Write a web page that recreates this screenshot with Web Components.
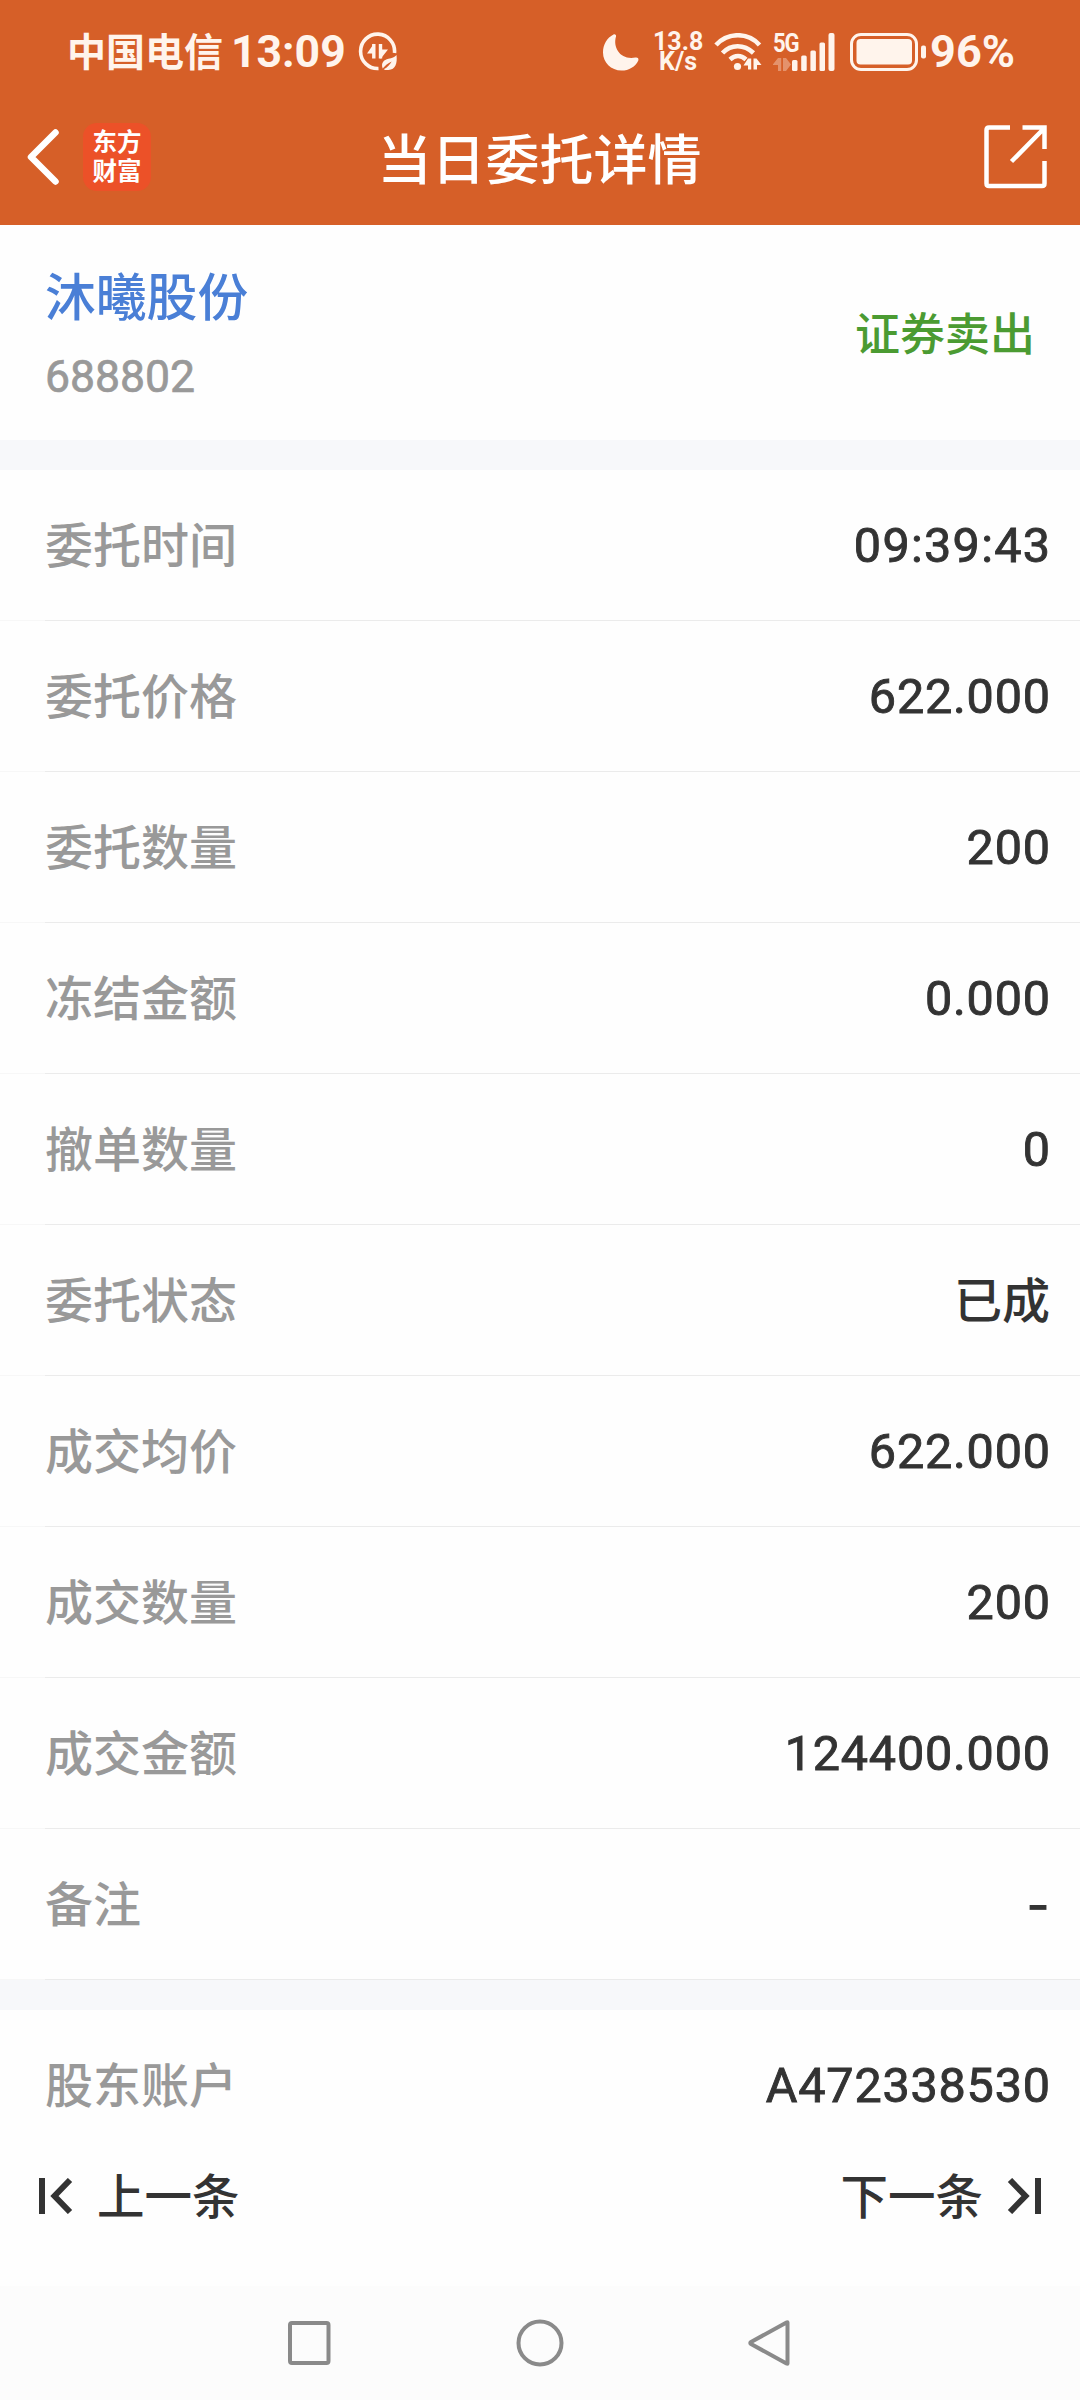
<!DOCTYPE html>
<html lang="zh-CN">
<head>
<meta charset="utf-8">
<title>当日委托详情</title>
<style>
  body {
    margin: 0;
    width: 1080px;
    background: #fefefe;
    font-family: Roboto, "Noto Sans CJK SC", sans-serif;
    font-weight: 500;
    color: #333;
  }
</style>
</head>
<body>
<order-page></order-page>

<script>
class StatusBar extends HTMLElement {
  constructor() {
    super();
    this.attachShadow({ mode: "open" });
  }
  connectedCallback() {
    this.shadowRoot.innerHTML = `
      <style>
        :host {
          display: flex;
          align-items: center;
          box-sizing: border-box;
          height: 103px;
          padding: 0 65px 0 67px;
          color: #fff4ec;
          font-weight: 700;
          white-space: nowrap;
        }
        svg { display: block; flex: none; }
        .carrier { font-size: 39px; line-height: 60px; padding-top: 3px; }
        .time { font-size: 44.500px; line-height: 60px; margin-left: 8px; }
        .saver { margin-left: 12px; }
        .right { display: flex; align-items: center; margin-left: auto; }
        .speed {
          width: 52px;
          margin-left: 13px;
          font-size: 25px;
          line-height: 20px;
          text-align: center;
          white-space: pre-line;
        }
        .wifi { margin-left: 10px; }
        .cell { display: grid; margin-left: 11px; }
        .cell > * { grid-area: 1 / 1; }
        .cell span { font-size: 26px; line-height: 20px; letter-spacing: -1.5px; transform: scaleX(0.85); transform-origin: left; }
        .battery { margin-left: 15px; }
        .level { font-size: 45px; line-height: 60px; margin-left: 4px; }
      </style>
      <span class="carrier">中国电信</span>
      <span class="time">13:09</span>
      <svg class="saver" width="40" height="40" viewBox="0 0 40 40" fill="none" stroke="currentColor" stroke-width="3.6">
        <path d="M36.500 21A17 17.200 0 1 0 20.500 36.500"/>
        <path d="M15.800 12v14.500M22.500 12v14.500" stroke-width="3.4"/>
        <path d="M16 11.500v10H9zM22.500 27v-9.500H30z" fill="currentColor" stroke="none"/>
        <path d="M38.500 23c1 8.500-1 14.500-8 15-2 .2-3.500 0-4.800-.8 4-1.900 6-4.400 8-7.700-4 1.700-6.500 4.200-9 7-2-5.500 1-8.800 5.800-9.800 3.500-.7 6-1.500 8-3.700z" fill="currentColor" stroke="none"/>
      </svg>
      <div class="right">
        <svg width="37" height="38" viewBox="0 0 37 38" fill="currentColor">
          <path d="M11.500 1.500c1.500-.7 3 .5 2.500 2C10.500 15 19 27.500 33.500 24.500c2-.4 3.500 1 2.800 2.900C33.500 33.500 27 37.500 19.500 37.500 9 37.500 1 29.500 1 19.500 1 11.500 5 4.800 11.500 1.500z"/>
        </svg>
        <div class="speed">13.8\nK/s</div>
        <svg class="wifi" width="48" height="38" viewBox="0 0 48 38" fill="none" stroke="currentColor" stroke-width="4.600">
          <path d="M2 12C14-1 34-1 45.500 12M8.500 20C17 11 30 11 39.500 20M16 26.500C21 22 27 22 32 26.500"/>
          <circle cx="23.500" cy="33.500" r="3.600" fill="currentColor" stroke="none"/>
          <path d="M34 25.500h3.200v11H34v-4h-4.500zM39.500 25.500h3l5 6.500h-4.500v4.500h-3.500z" fill="currentColor" stroke="none"/>
        </svg>
        <div class="cell">
          <svg width="62" height="38" viewBox="0 0 62 38" fill="currentColor">
            <path opacity=".35" d="M5 25h3.200v13H5v-6H-.5zM10 25h3l5 6.500-5 6.500h-3z"/>
            <rect x="19" y="27" width="5.500" height="11" rx="1.500"/>
            <rect x="28.200" y="22.500" width="5.500" height="15.500" rx="1.500"/>
            <rect x="37.400" y="17.500" width="5.500" height="20.500" rx="1.500"/>
            <rect x="46.500" y="9.500" width="5.500" height="28.500" rx="1.500"/>
            <rect x="55.500" y="0" width="6" height="38" rx="2"/>
          </svg>
          <span>5G</span>
        </div>
        <svg class="battery" width="76" height="38" viewBox="0 0 76 38" fill="currentColor">
          <rect x="1.500" y="1.500" width="65" height="35" rx="9.500" fill="none" stroke="currentColor" stroke-width="3"/>
          <rect x="6.500" y="6" width="55.500" height="25.500" rx="4"/>
          <rect x="71" y="12.500" width="5" height="13" rx="2"/>
        </svg>
        <span class="level">96%</span>
      </div>
    `;
  }
}

class TitleBar extends HTMLElement {
  constructor() {
    super();
    this.attachShadow({ mode: "open" });
  }
  connectedCallback() {
    this.shadowRoot.innerHTML = `
      <style>
        :host {
          display: grid;
          grid-template-columns: 1fr auto 1fr;
          align-items: center;
          height: 108px;
          padding: 0 32px 14px 27px;
          color: #fff;
        }
        .left { display: flex; align-items: center; gap: 24px; }
        .logo {
          display: flex;
          flex-direction: column;
          align-items: center;
          justify-content: center;
          width: 68px;
          height: 68px;
          border-radius: 14px;
          background: #ec5128;
          font-size: 24.500px;
          line-height: 29px;
          font-weight: 700;
        }
        .title { font-size: 54px; line-height: 70px; padding-top: 9px; padding-left: 4px; }
        .share { justify-self: end; }
        svg { display: block; }
      </style>
      <div class="left">
        <svg width="32" height="56" viewBox="0 0 32 56" fill="none" stroke="currentColor" stroke-width="6.500" stroke-linecap="round" stroke-linejoin="round">
          <path d="M28.500 3.500 4 28l24.500 24.500"/>
        </svg>
        <div class="logo"><span>东方</span><span>财富</span></div>
      </div>
      <div class="title"><slot></slot></div>
      <svg class="share" width="64" height="64" viewBox="0 0 64 64" fill="none" stroke="currentColor" stroke-width="4.500">
        <path d="M26 2.500H5Q2.500 2.500 2.500 5v53.500q0 2.500 2.500 2.500h53q2.500 0 2.500-2.500V36"/>
        <path d="M38.500 2.500h22V24M60 3.500 27.500 36.500"/>
      </svg>
    `;
  }
}

class StockHeader extends HTMLElement {
  constructor() {
    super();
    this.attachShadow({ mode: "open" });
  }
  connectedCallback() {
    this.shadowRoot.innerHTML = `
      <style>
        :host {
          display: flex;
          justify-content: space-between;
          align-items: center;
          box-sizing: border-box;
          height: 215px;
          padding: 0 45px;
        }
        .name { font-size: 50.800px; line-height: 76px; padding-top: 2px; color: #4a7fd6; }
        .code { font-size: 44.500px; line-height: 60px; margin-top: 10px; color: #999; font-weight: 400; -webkit-text-stroke: 0.7px; }
        .side { font-size: 45px; line-height: 60px; padding-top: 6px; color: #4b9b32; }
      </style>
      <div>
        <div class="name"><slot name="name"></slot></div>
        <div class="code"><slot name="code"></slot></div>
      </div>
      <div class="side"><slot name="side"></slot></div>
    `;
  }
}

class DetailRow extends HTMLElement {
  constructor() {
    super();
    this.attachShadow({ mode: "open" });
  }
  get kind() {
    const value = this.textContent.trim();
    if (value === "-") return "empty";
    if (value.includes(":")) return "number time";
    return /^[\w.]+$/.test(value) ? "number" : "text";
  }
  connectedCallback() {
    const label = this.getAttribute("label") || "";
    this.shadowRoot.innerHTML = `
      <style>
        :host {
          display: flex;
          justify-content: space-between;
          align-items: center;
          box-sizing: border-box;
          height: 151px;
          padding: 0 30px 1px 45px;
          background: linear-gradient(to right, #f7f7f7 45px, #ebebeb 45px) bottom / 100% 1px no-repeat;
        }
        :host([plain]) { background: none; }
        .label { font-size: 48px; line-height: 72px; padding-top: 3px; color: #999; }
        .value { font-size: 48px; line-height: 72px; padding-top: 3px; }
        .number {
          font-size: 48.500px;
          font-weight: 400;
          letter-spacing: 0.8px;
          padding-top: 1px;
          margin-right: -0.8px;
          -webkit-text-stroke: 0.9px;
        }
        .time { letter-spacing: 1.3px; margin-right: -1.3px; }
        .empty { font-family: Inter, sans-serif; font-size: 52px; padding-top: 1px; }
      </style>
      <span class="label">${label}</span>
      <span class="value ${this.kind}"><slot></slot></span>
    `;
  }
}

class PagerBar extends HTMLElement {
  constructor() {
    super();
    this.attachShadow({ mode: "open" });
  }
  connectedCallback() {
    this.shadowRoot.innerHTML = `
      <style>
        :host {
          display: flex;
          justify-content: space-between;
          align-items: center;
          box-sizing: border-box;
          height: 125px;
          padding: 0 39px 55px;
          font-size: 47.500px;
          line-height: 70px;
        }
        div { display: flex; align-items: center; gap: 24px; }
        span { padding-top: 3px; }
        svg { display: block; }
      </style>
      <div>
        <svg width="34" height="36" viewBox="0 0 34 36" fill="none" stroke="currentColor" stroke-width="6">
          <path d="M3 0v36M31 2 15.500 18 31 34"/>
        </svg>
        <span>上一条</span>
      </div>
      <div>
        <span>下一条</span>
        <svg width="34" height="36" viewBox="0 0 34 36" fill="none" stroke="currentColor" stroke-width="6">
          <path d="M31 0v36M3 2 18.500 18 3 34"/>
        </svg>
      </div>
    `;
  }
}

class SystemNav extends HTMLElement {
  constructor() {
    super();
    this.attachShadow({ mode: "open" });
  }
  connectedCallback() {
    this.shadowRoot.innerHTML = `
      <style>
        :host {
          display: flex;
          justify-content: center;
          align-items: center;
          gap: 183px;
          height: 114px;
          background: #fcfcfc;
        }
        svg { display: block; fill: none; stroke: #8a8a8a; stroke-width: 4; stroke-linejoin: round; }
      </style>
      <svg width="48" height="48" viewBox="0 0 48 48"><rect x="5" y="4" width="38.500" height="40" rx="2"/></svg>
      <svg width="48" height="48" viewBox="0 0 48 48"><circle cx="24" cy="24" r="21.500"/></svg>
      <svg width="48" height="48" viewBox="0 0 48 48"><path d="M40.500 3.500v41q0 .5-1 0L4 25q-1.500-1 0-2L39.500 3.500q1-.5 1 0z"/></svg>
    `;
  }
}

class OrderPage extends HTMLElement {
  constructor() {
    super();
    this.attachShadow({ mode: "open" });
  }
  get rows() {
    return [
      ["委托时间", "09:39:43"],
      ["委托价格", "622.000"],
      ["委托数量", "200"],
      ["冻结金额", "0.000"],
      ["撤单数量", "0"],
      ["委托状态", "已成"],
      ["成交均价", "622.000"],
      ["成交数量", "200"],
      ["成交金额", "124400.000"],
      ["备注", "-"]
    ];
  }
  connectedCallback() {
    const rows = this.rows.map(([label, value]) => `<detail-row label="${label}">${value}</detail-row>`).join("");
    this.shadowRoot.innerHTML = `
      <style>
        :host {
          display: flex;
          flex-direction: column;
          height: 2400px;
          overflow: hidden;
        }
        header { height: 225px; background: #d65f28; }
        .band { height: 30px; background: #f7f8fa; }
        footer { margin-top: auto; }
      </style>
      <header>
        <status-bar></status-bar>
        <title-bar>当日委托详情</title-bar>
      </header>
      <stock-header>
        <span slot="name">沐曦股份</span>
        <span slot="code">688802</span>
        <span slot="side">证券卖出</span>
      </stock-header>
      <div class="band"></div>
      <section>${rows}</section>
      <div class="band"></div>
      <detail-row plain label="股东账户">A472338530</detail-row>
      <footer>
        <pager-bar></pager-bar>
        <system-nav></system-nav>
      </footer>
    `;
  }
}

customElements.define("status-bar", StatusBar);
customElements.define("title-bar", TitleBar);
customElements.define("stock-header", StockHeader);
customElements.define("detail-row", DetailRow);
customElements.define("pager-bar", PagerBar);
customElements.define("system-nav", SystemNav);
customElements.define("order-page", OrderPage);
</script>
</body>
</html>
